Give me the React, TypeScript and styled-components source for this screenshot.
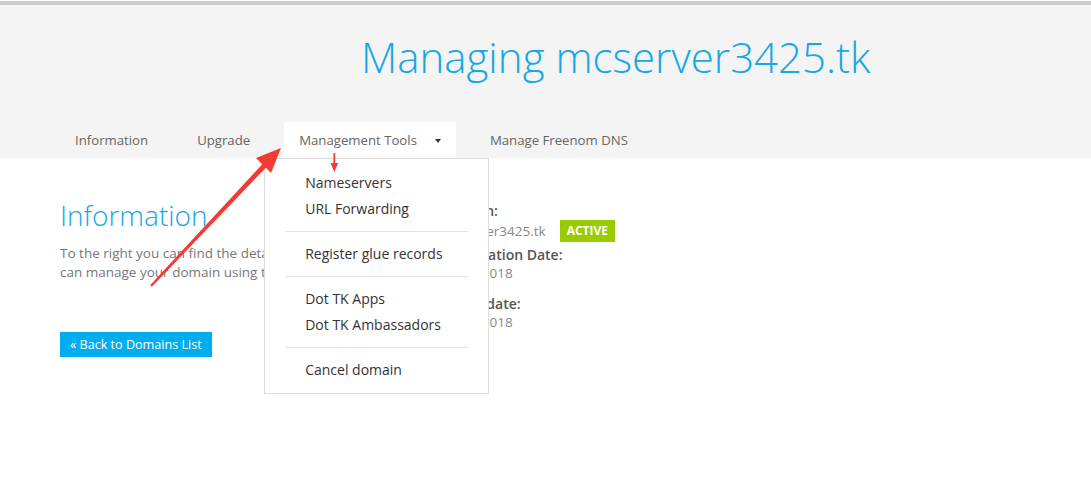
import React from "react";
import styled, { createGlobalStyle } from "styled-components";

const Global = createGlobalStyle`
  html, body { margin: 0; padding: 0; background: #fff; }
  body { font-family: "Open Sans", "Liberation Sans", sans-serif; width: 1091px; height: 494px; overflow: hidden; }
  * { box-sizing: border-box; }
`;

const Page = styled.div`
  position: relative;
  width: 1091px;
  height: 494px;
  padding-top: 1px;
`;

const Header = styled.header`
  background: #f4f4f4;
  border-top: 4px solid #cccccc;
  height: 157px;
  display: flex;
  flex-direction: column;
  justify-content: space-between;
`;

const Title = styled.h1`
  margin: 0;
  padding: 24px 0 0 361px;
  font-weight: 300;
  font-size: 42px;
  line-height: 56px;
  color: #15a7e8;
`;

const Tabs = styled.nav`
  display: flex;
  gap: 19px;
  padding-left: 60px;
  height: 36px;
  align-items: stretch;
`;

const Tab = styled.div<{ $active?: boolean }>`
  position: relative;
  display: flex;
  align-items: center;
  gap: 18px;
  padding: 0 15px;
  font-size: 13.2px;
  color: #666;
  background: ${(p) => (p.$active ? "#fff" : "transparent")};
  border-radius: 3px 3px 0 0;
`;

const Caret = styled.span`
  width: 0;
  height: 0;
  border-left: 3.5px solid transparent;
  border-right: 3.5px solid transparent;
  border-top: 4px solid #333;
  margin-top: 1px;
`;

const Menu = styled.ul`
  position: absolute;
  top: 36px;
  left: -20px;
  width: 225px;
  margin: 0;
  padding: 11px 0 10px;
  list-style: none;
  background: #fff;
  border: 1px solid #dcdcdc;
  z-index: 5;
`;

const MenuItem = styled.li`
  padding-left: 40px;
  font-size: 14px;
  line-height: 26px;
  color: #333;
  white-space: nowrap;
`;

const Divider = styled.li`
  height: 1px;
  margin: 9px 20px;
  background: #e3e3e3;
`;

const Main = styled.main`
  display: flex;
  padding: 39px 0 0 60px;
`;

const LeftCol = styled.section`
  width: 381px;
`;

const Heading = styled.h2`
  margin: 0;
  font-weight: 300;
  font-size: 28px;
  line-height: 36px;
  color: #15a7e8;
`;

const Para = styled.p`
  margin: 11px 0 0;
  width: 370px;
  font-size: 13.5px;
  line-height: 19px;
  color: #777;
`;

const BackButton = styled.div`
  display: inline-block;
  margin-top: 50px;
  height: 25px;
  padding: 0 10px;
  background: #00aeef;
  color: #fff;
  font-size: 12.6px;
  line-height: 25px;
`;

const RightCol = styled.section`
  padding-top: 5px;
  display: flex;
  flex-direction: column;
`;

const Field = styled.div<{ $gap?: number }>`
  margin-top: ${(p) => p.$gap ?? 0}px;
`;

const Label = styled.div`
  font-size: 14px;
  line-height: 18px;
  font-weight: 600;
  color: #555;
`;

const Value = styled.div`
  display: flex;
  align-items: center;
  gap: 14px;
  font-size: 13.5px;
  line-height: 18px;
  color: #888;
`;

const Badge = styled.span`
  display: inline-block;
  background: #99cc00;
  color: #fff;
  font-weight: 700;
  font-size: 12px;
  line-height: 22px;
  padding: 0 7px;
`;

const Overlay = styled.svg`
  position: absolute;
  left: 0;
  top: 0;
  pointer-events: none;
  z-index: 10;
`;

export default function App() {
  return (
    <Page>
      <Global />
      <Header>
        <Title>Managing mcserver3425.tk</Title>
        <Tabs>
          <Tab>Information</Tab>
          <Tab>Upgrade</Tab>
          <Tab $active>
            Management Tools
            <Caret />
            <Menu>
              <MenuItem>Nameservers</MenuItem>
              <MenuItem>URL Forwarding</MenuItem>
              <Divider />
              <MenuItem>Register glue records</MenuItem>
              <Divider />
              <MenuItem>Dot TK Apps</MenuItem>
              <MenuItem>Dot TK Ambassadors</MenuItem>
              <Divider />
              <MenuItem>Cancel domain</MenuItem>
            </Menu>
          </Tab>
          <Tab>Manage Freenom DNS</Tab>
        </Tabs>
      </Header>
      <Main>
        <LeftCol>
          <Heading>Information</Heading>
          <Para>
            To the right you can find the details of your domain. You can manage your domain using the tabs above.
          </Para>
          <BackButton>« Back to Domains List</BackButton>
        </LeftCol>
        <RightCol>
          <Field>
            <Label>Domain:</Label>
            <Value>
              mcserver3425.tk <Badge>ACTIVE</Badge>
            </Value>
          </Field>
          <Field $gap={4}>
            <Label>Registration Date:</Label>
            <Value>01/08/2018</Value>
          </Field>
          <Field $gap={13}>
            <Label>Expiry date:</Label>
            <Value>01/08/2018</Value>
          </Field>
        </RightCol>
      </Main>
      <Overlay width="1091" height="494" viewBox="0 0 1091 494">
        <polygon
          points="150.1,285.2 262.2,164.3 256,158 281,148 271,173 265.8,167.7 151.9,286.8"
          fill="#f23b37"
        />
        <polygon points="333.4,153 335.2,153 335.2,163 338.2,163 334.3,172 330.6,163 333.4,163" fill="#f23b37" />
      </Overlay>
    </Page>
  );
}
